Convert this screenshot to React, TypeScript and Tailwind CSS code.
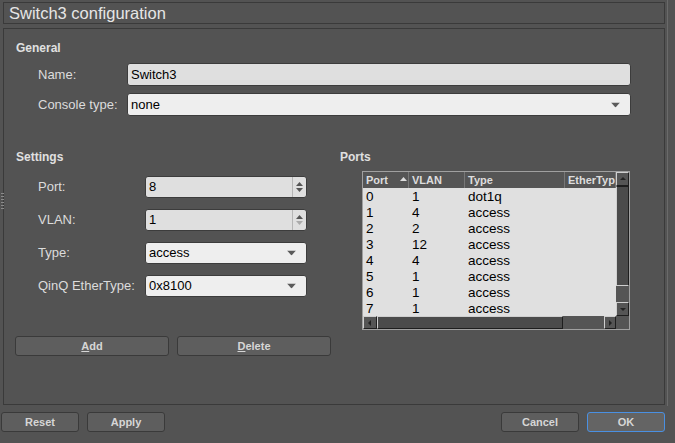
import { ReactNode } from "react";

const ports = [
  { port: "0", vlan: "1", type: "dot1q" },
  { port: "1", vlan: "4", type: "access" },
  { port: "2", vlan: "2", type: "access" },
  { port: "3", vlan: "12", type: "access" },
  { port: "4", vlan: "4", type: "access" },
  { port: "5", vlan: "1", type: "access" },
  { port: "6", vlan: "1", type: "access" },
  { port: "7", vlan: "1", type: "access" },
];

const DownArrow = () => (
  <svg width="9" height="5" viewBox="0 0 9 5" className="absolute right-[10px] top-1/2 -translate-y-1/2">
    <path d="M0 0 L9 0 L4.5 5 Z" fill="#5a5a5a" />
  </svg>
);

const Spin = ({ value, downDisabled }: { value: string; downDisabled?: boolean }) => (
  <div className="flex h-[22px] w-[162px] rounded-[3px] border border-[#3c3c3c] bg-[#dfdfdf]">
    <div className="flex-1 pl-[3px] text-[13px] leading-[20px] text-black">{value}</div>
    <div className="flex w-[14px] flex-col items-center justify-center gap-[2px] border-l border-[#b5b5b5]">
      <svg width="7" height="4" viewBox="0 0 7 4"><path d="M0 4 L7 4 L3.5 0 Z" fill="#555" /></svg>
      <svg width="7" height="4" viewBox="0 0 7 4"><path d="M0 0 L7 0 L3.5 4 Z" fill={downDisabled ? "#aaa" : "#555"} /></svg>
    </div>
  </div>
);

const Select = ({ value, width }: { value: string; width: string }) => (
  <div className={`relative h-[22px] ${width} rounded-[3px] border border-[#3c3c3c] bg-[#eeeeee] pl-[3px] text-[13px] leading-[20px] text-black`}>
    {value}
    <DownArrow />
  </div>
);

const Row = ({ label, labelW, children }: { label: string; labelW: string; children: ReactNode }) => (
  <div className="flex items-center">
    <div className={`${labelW} pl-[22px] text-[13px] text-[#dcdcdc]`}>{label}</div>
    {children}
  </div>
);

const Btn = ({ children, className }: { children: ReactNode; className: string }) => (
  <div className={`flex h-[20px] items-center justify-center rounded-[3px] border border-[#3a3a3a] bg-[#5e5e5e] text-[11px] font-bold text-[#d6d6d6] ${className}`}>
    {children}
  </div>
);

const ScrollBtn = ({ dir }: { dir: "up" | "down" | "left" | "right" }) => {
  const d = { up: "M1 5 L7 5 L4 2 Z", down: "M1 3 L7 3 L4 6 Z", left: "M5 1 L5 7 L2 4 Z", right: "M3 1 L3 7 L6 4 Z" }[dir];
  return (
    <div className="flex h-full w-full items-center justify-center border border-b-[#1e1e1e] border-l-[#cfcfcf] border-r-[#1e1e1e] border-t-[#cfcfcf] bg-[#555]">
      <svg width="8" height="8" viewBox="0 0 8 8"><path d={d} fill="#222" /></svg>
    </div>
  );
};

const cols = [
  { w: "w-[46px]", key: "port" as const, label: "Port" },
  { w: "w-[56px]", key: "vlan" as const, label: "VLAN" },
  { w: "w-[100px]", key: "type" as const, label: "Type" },
  { w: "w-[51px]", key: null, label: "EtherType" },
];

const PortsTable = () => (
  <div className="ml-[22px] mt-[7px] flex h-[159px] w-[268px] flex-col border border-[#a0a0a0]">
    <div className="flex h-[144px]">
      <div className="flex w-[253px] flex-col">
        <div className="flex h-[16px] bg-[#555]">
          {cols.map((c) => (
            <div key={c.label} className={`${c.w} relative overflow-hidden whitespace-nowrap border-r border-[#777] pl-[3px] text-[11px] font-bold leading-[16px] text-[#dddddd]`}>
              {c.label}
              {c.key === "port" && (
                <svg width="7" height="4" viewBox="0 0 7 4" className="absolute left-[37px] top-[5px]"><path d="M0 4 L7 4 L3.5 0 Z" fill="#ddd" /></svg>
              )}
            </div>
          ))}
        </div>
        <div className="h-[128px] overflow-hidden bg-[#e0e0e0] pt-px">
          {ports.map((p) => (
            <div key={p.port} className="flex h-[16px] text-[13.5px] leading-[16px] text-black">
              <div className="w-[46px] pl-[3px]">{p.port}</div>
              <div className="w-[56px] pl-[3px]">{p.vlan}</div>
              <div className="w-[100px] pl-[3px]">{p.type}</div>
            </div>
          ))}
        </div>
      </div>
      <div className="flex w-[13px] flex-col bg-[#555]">
        <div className="h-[14px]"><ScrollBtn dir="up" /></div>
        <div className="h-[100px] border border-b-[#cfcfcf] border-l-[#cfcfcf] border-r-[#1e1e1e] border-t-[#1e1e1e] bg-[#4b4b4b]" />
        <div className="flex-1" />
        <div className="h-[14px]"><ScrollBtn dir="down" /></div>
      </div>
    </div>
    <div className="flex h-[13px] bg-[#555]">
      <div className="w-[14px]"><ScrollBtn dir="left" /></div>
      <div className="w-[186px] border border-b-[#1e1e1e] border-l-[#cfcfcf] border-r-[#1e1e1e] border-t-[#cfcfcf] bg-[#4b4b4b]" />
      <div className="flex-1" />
      <div className="w-[12px]"><ScrollBtn dir="right" /></div>
      <div className="w-[13px]" />
    </div>
  </div>
);

export default function App() {
  return (
    <div className="relative h-[443px] w-[675px] overflow-hidden bg-[#535353] font-['Liberation_Sans',Arial,sans-serif]">
      <div className="absolute right-[7px] top-0 h-[406px] w-px bg-[#6a6a6a]" />
      {/* splitter grip */}
      <div className="absolute left-[1px] top-[193px] flex flex-col gap-[2px]">
        {[0, 1, 2, 3, 4, 5].map((i) => (
          <div key={i} className="h-px w-[3px] bg-[#8a8a8a]" />
        ))}
      </div>
      <div className="ml-[3px] mt-[2px] h-[22px] w-[662px] border border-[#3a3a3a] pl-[5px] text-[16.5px] leading-[20px] text-[#e6e6e6]">
        Switch3 configuration
      </div>

      <div className="ml-[3px] mt-[4px] h-[377px] w-[662px] border border-[#3a3a3a] pl-[12px] pt-[12px]">
        <div className="h-[14px] text-[12px] font-bold leading-[14px] text-[#e0e0e0]">General</div>
        <div className="mt-[8px]">
          <Row label="Name:" labelW="w-[111px]">
            <div className="h-[23px] w-[504px] rounded-[3px] border border-[#3c3c3c] bg-[#dfdfdf] pl-[3px] text-[13px] leading-[21px] text-black">Switch3</div>
          </Row>
        </div>
        <div className="mt-[7px]">
          <Row label="Console type:" labelW="w-[111px]">
            <div className="relative h-[23px] w-[504px] rounded-[3px] border border-[#3c3c3c] bg-[#eeeeee] pl-[3px] text-[13px] leading-[21px] text-black">
              none
              <DownArrow />
            </div>
          </Row>
        </div>

        <div className="mt-[34px] flex">
          <div className="w-[324px]">
            <div className="h-[14px] text-[12px] font-bold leading-[14px] text-[#e0e0e0]">Settings</div>
            <div className="mt-[12px] flex flex-col gap-[11px]">
              <Row label="Port:" labelW="w-[129px]"><Spin value="8" /></Row>
              <Row label="VLAN:" labelW="w-[129px]"><Spin value="1" downDisabled /></Row>
              <Row label="Type:" labelW="w-[129px]"><Select value="access" width="w-[162px]" /></Row>
              <Row label="QinQ EtherType:" labelW="w-[129px]"><Select value="0x8100" width="w-[162px]" /></Row>
            </div>
            <div className="-ml-px mt-[39px] flex gap-[8px]">
              <Btn className="w-[154px]"><span className="underline">A</span>dd</Btn>
              <Btn className="w-[154px]"><span className="underline">D</span>elete</Btn>
            </div>
          </div>
          <div>
            <div className="h-[14px] text-[12px] font-bold leading-[14px] text-[#e0e0e0]">Ports</div>
            <PortsTable />
          </div>
        </div>
      </div>

      <div className="mt-[7px] flex">
        <Btn className="ml-px w-[78px]">Reset</Btn>
        <Btn className="ml-[8px] w-[78px]">Apply</Btn>
        <Btn className="ml-auto w-[78px]">Cancel</Btn>
        <Btn className="mr-[10px] ml-[8px] w-[78px] !border-[#4a90e2] bg-[#646464]">OK</Btn>
      </div>
    </div>
  );
}
